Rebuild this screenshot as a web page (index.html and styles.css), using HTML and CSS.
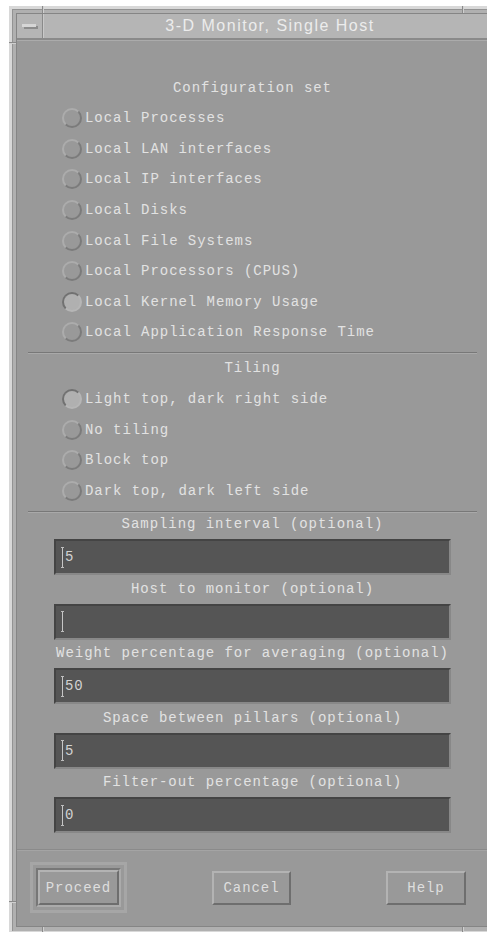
FILE: index.html
```html
<!DOCTYPE html>
<html lang="en">
<head>
<meta charset="utf-8">
<title>3-D Monitor, Single Host</title>
<link rel="stylesheet" href="styles.css">
</head>
<body>
<div class="window">
  <div class="client">
    <div class="titlebar">
      <div class="menu-btn"><span class="minus"></span></div>
      <div class="title">3-D Monitor, Single Host</div>
    </div>
    <div class="content">
      <div class="heading heading-top">Configuration set</div>
      <div class="radio-group">
        <div class="radio"><span class="dot"></span><span class="label">Local Processes</span></div>
        <div class="radio"><span class="dot"></span><span class="label">Local LAN interfaces</span></div>
        <div class="radio"><span class="dot"></span><span class="label">Local IP interfaces</span></div>
        <div class="radio"><span class="dot"></span><span class="label">Local Disks</span></div>
        <div class="radio"><span class="dot"></span><span class="label">Local File Systems</span></div>
        <div class="radio"><span class="dot"></span><span class="label">Local Processors (CPUS)</span></div>
        <div class="radio"><span class="dot on"></span><span class="label">Local Kernel Memory Usage</span></div>
        <div class="radio"><span class="dot"></span><span class="label">Local Application Response Time</span></div>
      </div>
      <div class="sep"></div>
      <div class="heading heading-tiling">Tiling</div>
      <div class="radio-group radio-group-tiling">
        <div class="radio"><span class="dot on"></span><span class="label">Light top, dark right side</span></div>
        <div class="radio"><span class="dot"></span><span class="label">No tiling</span></div>
        <div class="radio"><span class="dot"></span><span class="label">Block top</span></div>
        <div class="radio"><span class="dot"></span><span class="label">Dark top, dark left side</span></div>
      </div>
      <div class="sep sep-fields"></div>
      <div class="fields">
        <div class="field-label">Sampling interval (optional)</div>
        <div class="field"><span class="caret"></span><span class="value">5</span></div>
        <div class="field-label">Host to monitor (optional)</div>
        <div class="field"><span class="caret"></span><span class="value"></span></div>
        <div class="field-label">Weight percentage for averaging (optional)</div>
        <div class="field"><span class="caret"></span><span class="value">50</span></div>
        <div class="field-label">Space between pillars (optional)</div>
        <div class="field"><span class="caret"></span><span class="value">5</span></div>
        <div class="field-label">Filter-out percentage (optional)</div>
        <div class="field"><span class="caret"></span><span class="value">0</span></div>
      </div>
      <div class="sep sep-full"></div>
      <div class="buttons">
        <div class="default-ring">
          <div class="sunken">
            <button class="btn btn-default" type="button">Proceed</button>
          </div>
        </div>
        <button class="btn btn-cancel" type="button">Cancel</button>
        <button class="btn btn-help" type="button">Help</button>
      </div>
    </div>
  </div>
  <!-- resize-handle notches cut into the window frame -->
  <span class="notch notch-v notch-top-left"></span>
  <span class="notch notch-v notch-top-right"></span>
  <span class="notch notch-h notch-left-top"></span>
  <span class="notch notch-h notch-left-bottom"></span>
  <span class="notch notch-v notch-bottom-left"></span>
  <span class="notch notch-v notch-bottom-right"></span>
</div>
</body>
</html>
```

FILE: styles.css
```css
html, body {
  margin: 0;
  padding: 0;
  background: #ffffff;
  overflow: hidden;
  width: 487px;
  height: 932px;
}

/* ---- window manager frame ---- */
.window {
  position: relative;
  margin: 6px 0 0 9px;
  width: 495px;
  border-top: 3px solid #d8d8d8;
  border-left: 3px solid #d8d8d8;
  border-right: 3px solid #7e7e7e;
  border-bottom: 3px solid #d8d8d8;
  background: #b0b0b0;
  padding: 4px;
  box-shadow: inset 1px 1px 0 #939393;
  box-sizing: border-box;
}

.client {
  border: 1px solid #858585;
  background: #999999;
}

.titlebar {
  display: flex;
  height: 24px;
  background: #b5b5b5;
  border-bottom: 2px solid #8a8a8a;
  box-shadow: 0 1px 0 #ababab;
  margin-bottom: 1px;
}

.menu-btn {
  width: 25px;
  flex: none;
  border-right: 1px solid #8a8a8a;
  box-shadow: 1px 0 0 #c9c9c9;
  display: flex;
  align-items: center;
  justify-content: center;
}

.minus {
  display: block;
  width: 14px;
  height: 3px;
  margin: 0 2px 2px 0;
  background: #d6d6d6;
  box-shadow: 2px 2px 0 #8c8c8c;
}

.title {
  flex: 1;
  text-align: center;
  font-family: "Liberation Sans", Arial, sans-serif;
  font-size: 16px;
  letter-spacing: 1.5px;
  line-height: 24px;
  color: #ececec;
  margin-left: 1px;
}

/* ---- dialog body ---- */
.content {
  width: 471px;
  display: flex;
  flex-direction: column;
  font-family: "Liberation Mono", "DejaVu Sans Mono", monospace;
  font-size: 14px;
  letter-spacing: 0.95px;
  color: #e2e2e2;
}

.heading {
  height: 20px;
  line-height: 20px;
  text-align: center;
}

.heading-top { margin-top: 37px; }
.heading-tiling { margin-top: 4px; }

.radio-group { margin-top: 5px; }
.radio-group-tiling { margin-top: 6px; }

.radio {
  height: 30.6px;
  display: flex;
  align-items: center;
  padding-left: 45px;
}

.dot {
  width: 20px;
  height: 20px;
  box-sizing: border-box;
  border-radius: 50%;
  border: 2px solid;
  border-color: #acacac #7b7b7b #7b7b7b #acacac;
  flex: none;
}

.dot.on {
  border-color: #717171 #b6b6b6 #b6b6b6 #717171;
  background: #b0b0b0;
}

.label {
  margin-left: 3px;
  white-space: pre;
}

.sep {
  height: 0;
  border-top: 1px solid #787878;
  border-bottom: 1px solid #a9a9a9;
  margin: 4px 11px 0;
}

.sep-fields { margin-top: 5px; }

.sep-full {
  margin: 16px 0 0;
  border-top-color: #8a8a8a;
  border-bottom-color: #a4a4a4;
}

/* ---- text fields ---- */
.fields {
  display: flex;
  flex-direction: column;
  margin-top: 1px;
}

.field-label {
  height: 20px;
  line-height: 20px;
  text-align: center;
  white-space: pre;
}

.field {
  height: 36px;
  box-sizing: border-box;
  margin: 5px 37px 3.5px;
  background: #555555;
  border: 2px solid;
  border-color: #444444 #888888 #888888 #444444;
  display: flex;
  align-items: center;
  padding-left: 5px;
  color: #d2d2d2;
}

.field:last-child { margin-bottom: 0; }

.caret {
  width: 3px;
  height: 21px;
  box-sizing: border-box;
  border-top: 1px solid #bdbdbd;
  border-bottom: 1px solid #bdbdbd;
  background: linear-gradient(to right, transparent 1px, #c6c6c6 1px, #c6c6c6 2px, transparent 2px);
  flex: none;
}

.value {
  margin-left: 1px;
  line-height: 20px;
}

/* ---- action buttons ---- */
.buttons {
  display: flex;
  align-items: center;
  padding: 11px 0 13px;
}

.btn {
  font: inherit;
  letter-spacing: inherit;
  color: #dedede;
  background: #999999;
  border: 2px solid;
  border-color: #b3b3b3 #6e6e6e #6e6e6e #b3b3b3;
  padding: 0;
  margin: 0;
  box-sizing: border-box;
  text-align: center;
  line-height: 28px;
}

.default-ring {
  margin-left: 13px;
  width: 97px;
  height: 51px;
  box-sizing: border-box;
  border: 3px solid #a6a6a6;
  padding: 3px;
}

.sunken {
  height: 100%;
  box-sizing: border-box;
  border: 2px solid;
  border-color: #777777 #ababab #ababab #777777;
}

.btn-default {
  width: 100%;
  height: 100%;
  display: block;
}

.btn-cancel {
  margin-left: 85px;
  width: 79px;
  height: 34px;
}

.btn-help {
  margin-left: 95px;
  width: 80px;
  height: 34px;
}

/* ---- frame notches ---- */
.notch {
  position: absolute;
  background: #8a8a8a;
}

.notch-v {
  width: 1px;
  height: 7px;
  box-shadow: 1px 0 0 #d0d0d0;
}

.notch-h {
  height: 1px;
  width: 7px;
  box-shadow: 0 1px 0 #d0d0d0;
}

.notch-top-left { top: -3px; left: 30px; }
.notch-top-right { top: -3px; left: 450px; }
.notch-left-top { left: -3px; top: 33px; }
.notch-left-bottom { left: -3px; top: 892px; }
.notch-bottom-left { bottom: -3px; left: 30px; }
.notch-bottom-right { bottom: -3px; left: 450px; }
```
